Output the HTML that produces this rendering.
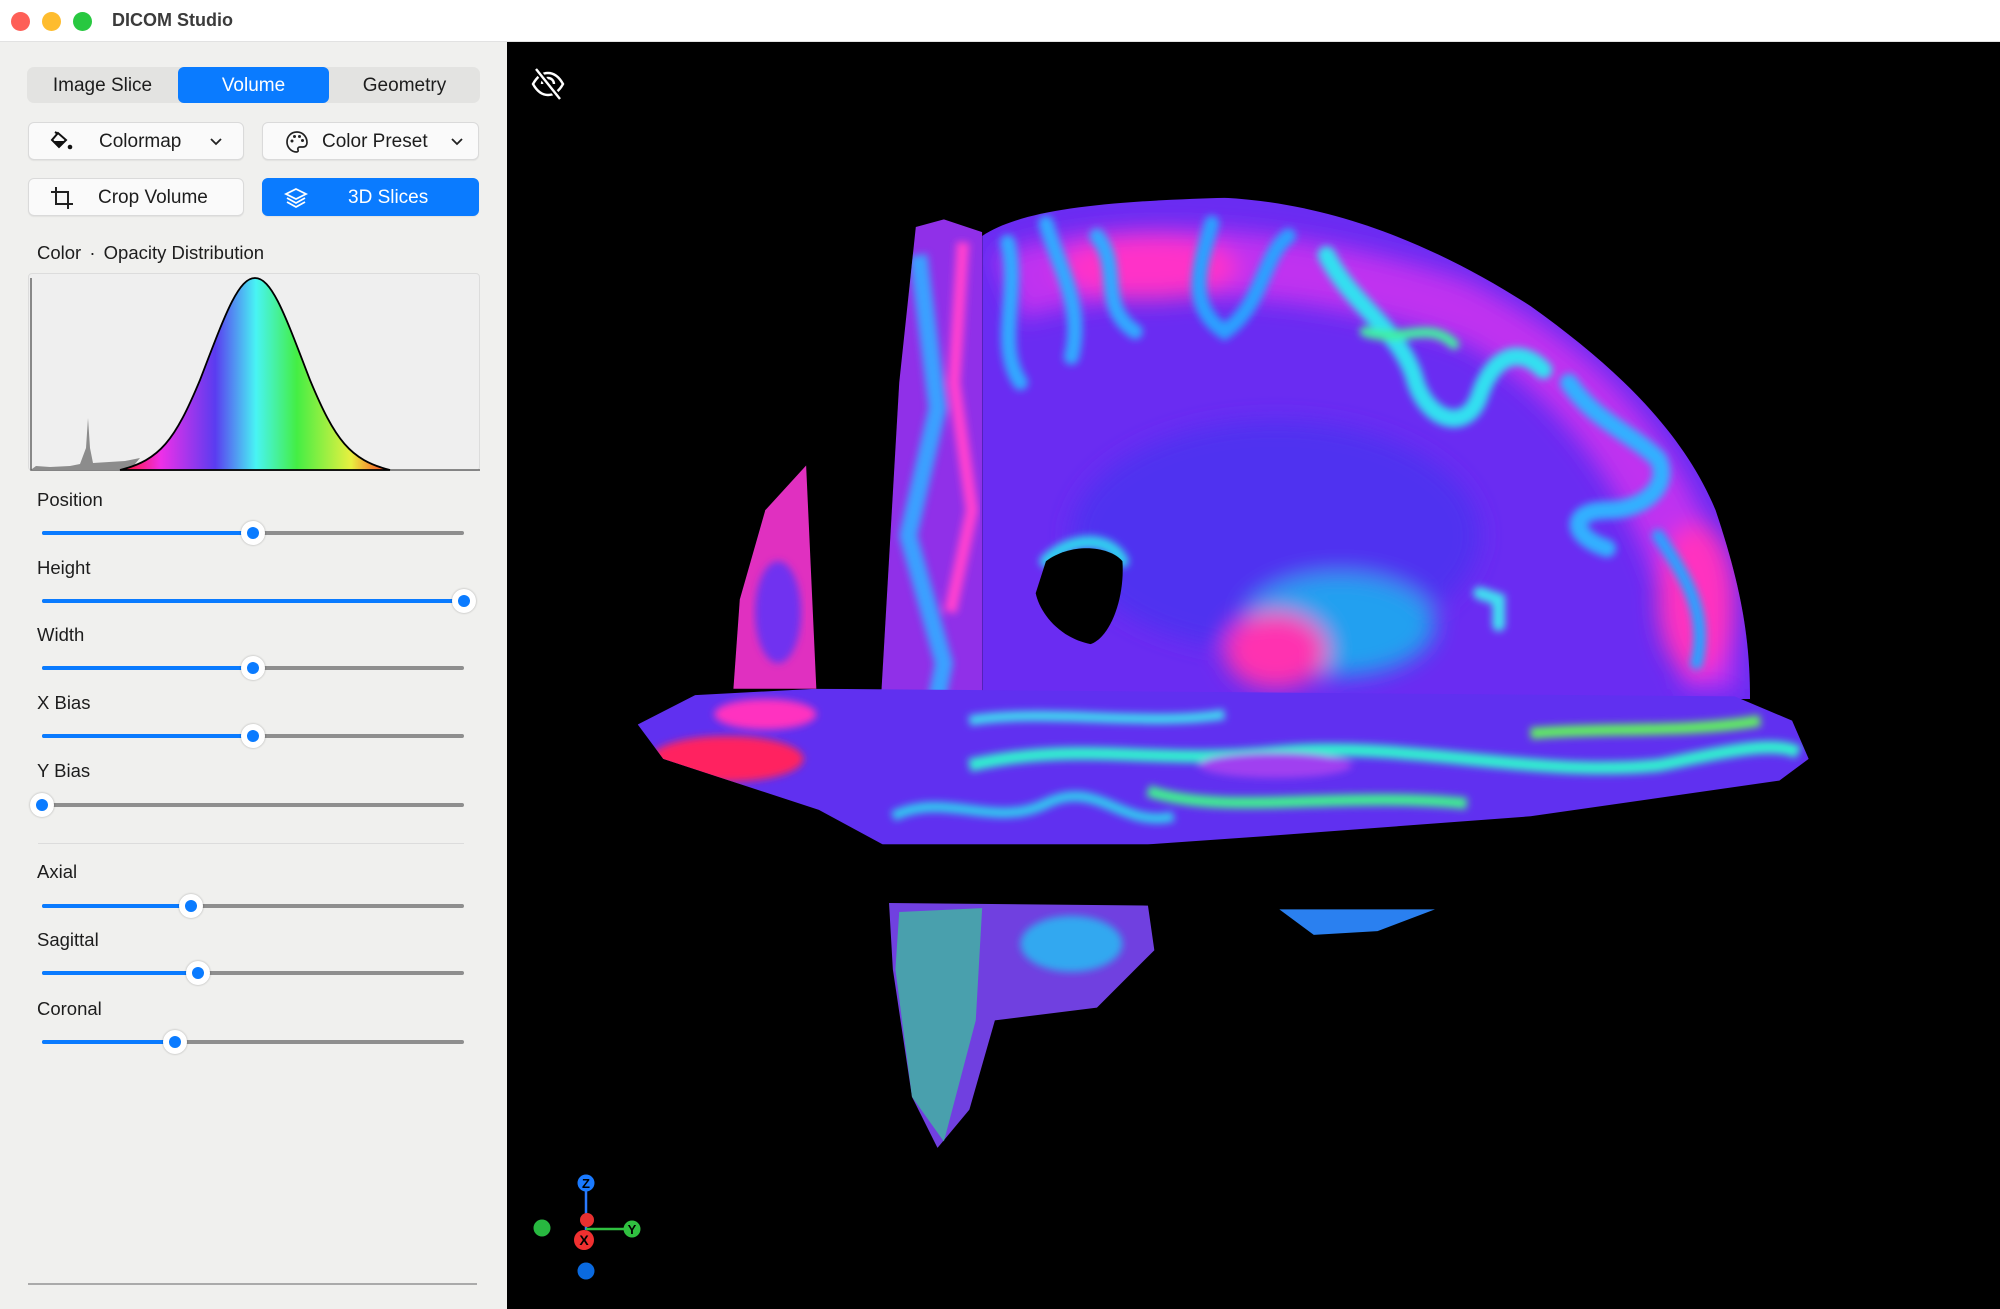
<!DOCTYPE html>
<html><head><meta charset="utf-8"><style>
*{margin:0;padding:0;box-sizing:border-box}
body{width:2000px;height:1309px;overflow:hidden;background:#fff;font-family:"Liberation Sans",sans-serif;position:relative;color:#1d1d1d}
.abs{position:absolute}
#title{left:0;top:0;width:2000px;height:42px;background:#fff;border-bottom:1px solid #e2e2e2}
.dot{position:absolute;top:12px;width:19px;height:19px;border-radius:50%}
#side{left:0;top:42px;width:507px;height:1267px;background:#f0f0ee}
#view{left:507px;top:42px;width:1493px;height:1267px;background:#000}
.seg{left:27px;top:67px;width:453px;height:36px;background:#e3e3e1;border-radius:7px}
.segi{position:absolute;top:68px;height:36px;line-height:36px;text-align:center;font-size:19px}
.btn{position:absolute;height:38px;border-radius:6px;background:#fafafa;border:1px solid #dadada;box-shadow:0 1px 1px rgba(0,0,0,.06);font-size:19px;line-height:38px}
.blue{background:#0a7bff;border-color:#0a7bff;color:#fff}
.lbl{position:absolute;left:37px;font-size:18.5px;color:#1d1d1d}
.trk{position:absolute;left:42px;width:422px;height:4px;border-radius:2px;background:#8e8e8e}
.fill{position:absolute;left:0;top:0;height:4px;border-radius:2px;background:#0a7bff}
.th{position:absolute;width:24px;height:24px;border-radius:50%;background:#fff;box-shadow:0 0 2px rgba(0,0,0,.3);top:-10px;margin-left:-12px}
.th:after{content:"";position:absolute;left:6px;top:6px;width:12px;height:12px;border-radius:50%;background:#0a7bff}
</style></head><body>
<div id="title" class="abs">
<div class="dot" style="left:11px;background:#fe5f57"></div>
<div class="dot" style="left:42px;background:#febc2e"></div>
<div class="dot" style="left:73px;background:#28c840"></div>
<div class="abs" style="left:112px;top:10px;font-size:18px;font-weight:bold;color:#3b3b3b">DICOM Studio</div>
</div>
<div id="side" class="abs"></div>
<div class="abs seg"></div>
<div class="abs" style="left:178px;top:67px;width:151px;height:36px;background:#0a7bff;border-radius:6px"></div>
<div class="segi" style="left:27px;width:151px">Image Slice</div>
<div class="segi" style="left:178px;width:151px;color:#fff">Volume</div>
<div class="segi" style="left:329px;width:151px">Geometry</div>

<div class="btn" style="left:28px;top:122px;width:216px">
<svg class="abs" style="left:20px;top:8px" width="26" height="22" viewBox="0 0 26 22"><path d="M9 2 L3 9 L10 16 L17 9 Z" fill="none" stroke="#111" stroke-width="2"/><path d="M4 10 L10 16 L16 10 Z" fill="#111"/><path d="M6 1 L9 3" stroke="#111" stroke-width="2"/><circle cx="21" cy="16" r="2.3" fill="#111"/></svg>
<span class="abs" style="left:70px">Colormap</span>
<svg class="abs" style="left:180px;top:14px" width="14" height="10" viewBox="0 0 14 10"><path d="M2 2 L7 7 L12 2" fill="none" stroke="#222" stroke-width="1.8"/></svg></div>
<div class="btn" style="left:262px;top:122px;width:217px">
<svg class="abs" style="left:22px;top:7px" width="24" height="24" viewBox="0 0 24 24"><path d="M12 2C6 2 2 6.5 2 12c0 5.5 4.5 10 9.5 10 1.6 0 2-1 1.5-2.2-.6-1.3.2-2.8 1.8-2.8H18c2.5 0 4-1.8 4-4.5C22 6.5 17.5 2 12 2z" fill="none" stroke="#222" stroke-width="1.7"/><circle cx="7" cy="11" r="1.5" fill="#222"/><circle cx="9.5" cy="6.5" r="1.5" fill="#222"/><circle cx="14.5" cy="6.5" r="1.5" fill="#222"/><circle cx="17.5" cy="10.5" r="1.5" fill="#222"/></svg>
<span class="abs" style="left:59px">Color Preset</span>
<svg class="abs" style="left:187px;top:14px" width="14" height="10" viewBox="0 0 14 10"><path d="M2 2 L7 7 L12 2" fill="none" stroke="#222" stroke-width="1.8"/></svg></div>
<div class="btn" style="left:28px;top:178px;width:216px">
<svg class="abs" style="left:21px;top:7px" width="24" height="24" viewBox="0 0 24 24"><path d="M6 1 V18 H23 M1 6 H18 V23" fill="none" stroke="#222" stroke-width="2"/></svg>
<span class="abs" style="left:69px">Crop Volume</span></div>
<div class="btn blue" style="left:262px;top:178px;width:217px">
<svg class="abs" style="left:21px;top:7px" width="24" height="24" viewBox="0 0 24 24"><path d="M12 3 L22 8 L12 13 L2 8 Z" fill="none" stroke="#fff" stroke-width="1.8"/><path d="M3 12 L12 17 L21 12 M3 16 L12 21 L21 16" fill="none" stroke="#fff" stroke-width="1.8"/></svg>
<span class="abs" style="left:85px">3D Slices</span></div>

<div class="lbl" style="top:242px">Color <span style="margin:0 3px">·</span> Opacity Distribution</div>
<div class="abs" style="left:28px;top:273px;width:452px;height:198px;background:#efefef;border:1px solid #dcdcdc;border-radius:4px"></div>
<svg class="abs" style="left:0;top:0" width="500" height="480" viewBox="0 0 500 480">
<defs><linearGradient id="sp" x1="120" x2="392" y1="0" y2="0" gradientUnits="userSpaceOnUse">
<stop offset="0" stop-color="#ff1020"/><stop offset=".15" stop-color="#ee30e8"/><stop offset=".35" stop-color="#5a3cf0"/><stop offset=".5" stop-color="#48f4f4"/><stop offset=".65" stop-color="#44ee44"/><stop offset=".85" stop-color="#e8f040"/><stop offset="1" stop-color="#ff2a20"/></linearGradient></defs>
<path d="M31 278 V470 H480" fill="none" stroke="#666" stroke-width="1.5"/>
<path d="M32 469 L36 466 L50 467 L70 466 L80 464 L86 448 L88 418 L90 448 L93 463 L125 461 L140 458 L130 470 L32 470 Z" fill="#8c8c8c"/>
<path d="M120 470 C160 460 175 440 200 380 C225 315 238 278 255 278 C272 278 285 315 310 380 C335 440 350 460 390 470 Z" fill="url(#sp)" stroke="#000" stroke-width="1.8"/>
</svg>

<div class="lbl" style="top:489px">Position</div>
<div class="trk" style="top:531px"><div class="fill" style="width:211px"></div><div class="th" style="left:211px"></div></div>
<div class="lbl" style="top:557px">Height</div>
<div class="trk" style="top:599px"><div class="fill" style="width:422px"></div><div class="th" style="left:422px"></div></div>
<div class="lbl" style="top:624px">Width</div>
<div class="trk" style="top:666px"><div class="fill" style="width:211px"></div><div class="th" style="left:211px"></div></div>
<div class="lbl" style="top:692px">X Bias</div>
<div class="trk" style="top:734px"><div class="fill" style="width:211px"></div><div class="th" style="left:211px"></div></div>
<div class="lbl" style="top:760px">Y Bias</div>
<div class="trk" style="top:803px"><div class="th" style="left:0px"></div></div>
<div class="abs" style="left:38px;top:843px;width:426px;height:1px;background:#dcdcdc"></div>
<div class="lbl" style="top:861px">Axial</div>
<div class="trk" style="top:904px"><div class="fill" style="width:149px"></div><div class="th" style="left:149px"></div></div>
<div class="lbl" style="top:929px">Sagittal</div>
<div class="trk" style="top:971px"><div class="fill" style="width:156px"></div><div class="th" style="left:156px"></div></div>
<div class="lbl" style="top:998px">Coronal</div>
<div class="trk" style="top:1040px"><div class="fill" style="width:133px"></div><div class="th" style="left:133px"></div></div>
<div class="abs" style="left:28px;top:1283px;width:449px;height:2px;background:#aaa"></div>

<div id="view" class="abs"></div>
<svg class="abs" style="left:530px;top:67px" width="36" height="34" viewBox="0 0 36 34"><path d="M3 17 C8 8 14 6 18 6 C22 6 28 8 33 17 C28 26 22 28 18 28 C14 28 8 26 3 17 Z" fill="none" stroke="#fff" stroke-width="2.4"/><path d="M12 17a6 6 0 0 1 12 0" fill="none" stroke="#fff" stroke-width="2.4"/><path d="M6 2 L30 32" stroke="#000" stroke-width="6"/><path d="M6 2 L30 32" stroke="#fff" stroke-width="2.4"/></svg>

<svg class="abs" style="left:0;top:0" width="2000" height="1309" viewBox="0 0 1568 1026.3" preserveAspectRatio="none">
<defs>
<filter id="bl"><feGaussianBlur stdDeviation="9"/></filter>
<filter id="bl2"><feGaussianBlur stdDeviation="3"/></filter>
<clipPath id="cor"><path d="M770 185 C800 165 860 158 960 155 C1050 160 1130 195 1200 240 C1270 290 1320 340 1345 400 C1365 460 1372 500 1372 548 L770 548 Z"/></clipPath>
<clipPath id="sag"><path d="M718 178 L740 172 L770 182 L770 660 L692 660 L690 560 L705 300 Z"/></clipPath>
<clipPath id="ax"><path d="M500 568 L545 545 L640 540 L1360 546 L1405 565 L1418 595 L1395 612 L1200 640 L1000 655 L900 662 L692 662 L642 635 L520 595 Z"/></clipPath>
</defs>
<g clip-path="url(#cor)">
<rect x="760" y="150" width="620" height="400" fill="#6a2cf2"/>
<g filter="url(#bl)">
<path d="M780 200 C860 170 1000 170 1150 220 C1250 270 1320 340 1360 470 L1360 540 L1320 540 C1300 420 1240 320 1150 270 C1040 230 900 220 800 250 Z" fill="#c030f0"/>
<ellipse cx="900" cy="210" rx="70" ry="25" fill="#ff30c8"/>
<ellipse cx="1330" cy="470" rx="30" ry="60" fill="#ff30c0"/>
<ellipse cx="1000" cy="420" rx="160" ry="90" fill="#5030f0"/>
<ellipse cx="1050" cy="490" rx="75" ry="40" fill="#20a0f0"/>
<ellipse cx="1000" cy="510" rx="40" ry="30" fill="#ff30b0"/>
</g>
<g filter="url(#bl2)" fill="none" stroke-linecap="round">
<path d="M790 190 C800 230 780 270 800 300 M820 175 C830 210 850 240 840 280 M860 185 C880 210 860 240 890 260" stroke="#30a8ff" stroke-width="12"/>
<path d="M950 175 C940 210 930 240 960 260 C990 240 990 200 1010 185" stroke="#2aa0ff" stroke-width="12"/>
<path d="M1040 200 C1060 240 1100 260 1110 300 C1120 330 1150 340 1160 310 C1170 280 1190 270 1210 290" stroke="#30e0f0" stroke-width="14"/>
<path d="M1070 260 C1100 270 1120 250 1140 270" stroke="#40f0a0" stroke-width="8"/>
<path d="M1230 300 C1250 330 1280 340 1300 360 C1310 380 1290 400 1260 400 C1230 400 1230 420 1260 430" stroke="#30b0ff" stroke-width="14"/>
<path d="M1300 420 C1320 450 1340 480 1330 520" stroke="#2aa0ff" stroke-width="10"/>
<path d="M820 440 C840 420 870 420 880 440" stroke="#30d0f0" stroke-width="10"/>
<path d="M1160 465 L1175 470 L1175 490" stroke="#40e0f0" stroke-width="10"/>
</g>
<path d="M820 440 C840 425 870 428 880 440 C882 470 870 500 855 505 C830 500 815 480 812 465 Z" fill="#000"/>
</g>
<g clip-path="url(#sag)">
<rect x="680" y="170" width="100" height="500" fill="#9030e8"/>
<g filter="url(#bl2)">
<path d="M720 200 L735 320 L712 420 L740 520 L720 620" stroke="#3aa0ff" stroke-width="14" fill="none"/>
<path d="M755 190 L748 300 L762 400 L745 480" stroke="#ff40d0" stroke-width="10" fill="none"/>
<path d="M700 560 L760 600 L720 650" stroke="#40e0d0" stroke-width="12" fill="none"/>
</g>
</g>
<g clip-path="url(#ax)">
<rect x="495" y="535" width="930" height="130" fill="#6030f0"/>
<g filter="url(#bl2)">
<ellipse cx="570" cy="595" rx="60" ry="18" fill="#ff2060"/>
<ellipse cx="600" cy="560" rx="40" ry="12" fill="#ff30c0"/>
<path d="M760 600 C850 580 900 600 1000 590 C1100 580 1200 610 1300 600 C1350 590 1390 580 1410 590" stroke="#30f0d0" stroke-width="10" fill="none"/>
<path d="M900 620 C960 640 1050 620 1150 630" stroke="#40f090" stroke-width="9" fill="none"/>
<path d="M1200 575 C1260 570 1320 575 1380 565" stroke="#60f060" stroke-width="9" fill="none"/>
<path d="M760 565 C820 555 900 570 960 560" stroke="#40d8f0" stroke-width="8" fill="none"/>
<path d="M700 640 C740 620 780 650 820 630 C860 610 880 650 920 640" stroke="#30c8f0" stroke-width="8" fill="none"/>
<ellipse cx="1000" cy="600" rx="60" ry="10" fill="#a040f0"/>
</g>
</g>
<path d="M632 365 L600 400 L580 470 L575 540 L640 540 Z" fill="#e030c0"/>
<ellipse cx="610" cy="480" rx="18" ry="40" fill="#7030f0" filter="url(#bl2)"/>
<path d="M697 708 L900 710 L905 745 L860 790 L780 800 L760 870 L735 900 L715 860 L700 760 Z" fill="#7040e0"/>
<path d="M705 715 L770 712 L765 800 L740 895 L715 860 L702 760 Z" fill="#40b8a0" opacity=".8"/>
<ellipse cx="840" cy="740" rx="40" ry="22" fill="#30a8f0" filter="url(#bl2)"/>
<path d="M1003 713 L1125 713 L1080 730 L1030 733 Z" fill="#2a80f0"/>
</svg>

<svg class="abs" style="left:520px;top:1160px" width="140" height="130" viewBox="520 1160 140 130">
<line x1="586" y1="1183" x2="586" y2="1230" stroke="#2a7aff" stroke-width="2.5"/>
<circle cx="542" cy="1228" r="8.5" fill="#28b840"/>
<line x1="586" y1="1229" x2="632" y2="1229" stroke="#30c040" stroke-width="2.5"/>
<circle cx="586" cy="1183" r="8.5" fill="#1a7aff"/><text x="586" y="1188" text-anchor="middle" font-size="13" font-weight="bold" fill="#000" font-family="Liberation Sans">Z</text>
<circle cx="587" cy="1220" r="7" fill="#e83030"/>
<circle cx="632" cy="1229" r="8.5" fill="#30c040"/><text x="632" y="1234" text-anchor="middle" font-size="13" font-weight="bold" fill="#000" font-family="Liberation Sans">Y</text>
<circle cx="584" cy="1240" r="10" fill="#f03030"/><text x="584" y="1245" text-anchor="middle" font-size="14" font-weight="bold" fill="#000" font-family="Liberation Sans">X</text>
<circle cx="586" cy="1271" r="8.5" fill="#0a6ae0"/>
</svg>
</body></html>
